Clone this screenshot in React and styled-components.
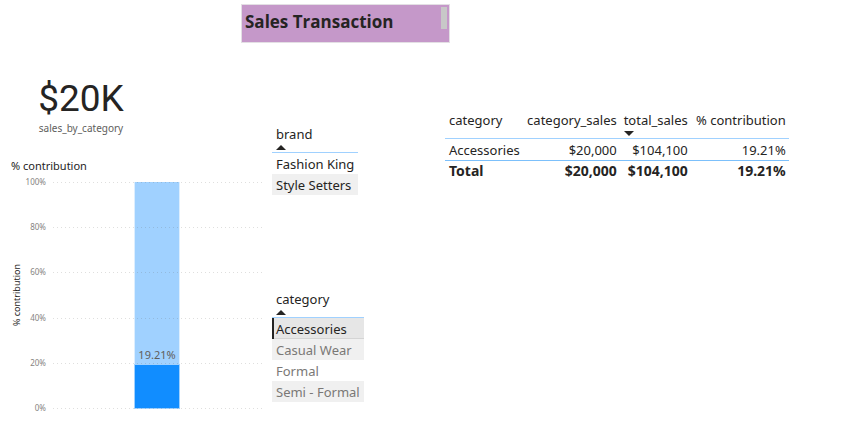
import React from "react";
import styled, { createGlobalStyle } from "styled-components";

const GlobalStyle = createGlobalStyle`
  * { box-sizing: border-box; }
  body {
    margin: 0;
    background: #fff;
    color: #252423;
    font-family: "Noto Sans", "Open Sans", sans-serif;
    font-size: 13px;
    line-height: 20px;
  }
`;

const Page = styled.main`
  padding-top: 4px;
`;

const Header = styled.header`
  display: grid;
  grid-template-columns: 241fr 209fr 402fr;
`;

const TitleCard = styled.div`
  grid-column: 2;
  display: flex;
  justify-content: space-between;
  height: 39px;
  padding: 2px 2px 0 3px;
  border: 1px solid #e3dfe4;
  background: #c598c9;
`;

const Title = styled.h1`
  margin: 0;
  font: 700 17px/29px "Open Sans", sans-serif;
  white-space: nowrap;
`;

const ScrollThumb = styled.span`
  width: 6px;
  height: 22px;
  background: #c8c8c8;
`;

const Board = styled.div`
  display: grid;
  grid-template-columns: 272fr 173fr 407fr;
  align-items: start;
`;

const Column = styled.section`
  min-width: 0;
  padding-top: ${(p) => p.$top}px;
`;

const Kpi = styled.div`
  display: flex;
  flex-direction: column;
  align-items: center;
  width: 162px;
`;

const KpiValue = styled.strong`
  font: 400 37px/44px Roboto, sans-serif;
`;

const KpiLabel = styled.span`
  color: #605e5c;
  font-size: 10px;
  line-height: 15px;
`;

const ChartTitle = styled.h2`
  margin: 22px 0 0;
  padding-left: 11px;
  font-size: 11px;
  font-weight: 400;
  line-height: 16px;
`;

const Chart = styled.svg`
  display: block;
  width: 100%;
  height: auto;
  font-family: "Noto Sans", sans-serif;
`;

const Table = styled.table`
  border-collapse: separate;
  border-spacing: 0;
  margin-bottom: ${(p) => p.$after || 0}px;
  white-space: nowrap;
`;

const HeadCell = styled.th`
  height: 29px;
  padding: 0 ${(p) => (p.$align ? 3 : 4)}px;
  border-bottom: 1px solid #a0d1ff;
  font-weight: 400;
  text-align: ${(p) => p.$align || "left"};
  vertical-align: top;
`;

const SortButton = styled.button`
  display: flex;
  flex-direction: column;
  align-items: flex-start;
  padding: 0;
  border: 0;
  background: none;
  color: inherit;
  font: inherit;
  margin-left: ${(p) => (p.$end ? "auto" : "0")};
  cursor: pointer;
`;

const Arrow = styled.svg`
  display: block;
  width: 10px;
  height: 5px;
  margin-top: 1px;
  fill: #252423;
`;

const ListCell = styled.td`
  height: 21px;
  padding: 0 4px;
  color: ${(p) => (p.$dim ? "#7a7876" : "#252423")};
  background: ${(p) => (p.$selected ? "#e6e6e6" : p.$shade ? "#f0f0f0" : "#fff")};
  box-shadow: ${(p) =>
    p.$selected ? "inset 2px 0 #252423, inset 0 -1px #d4d4d4" : "none"};
`;

const Cell = styled.td`
  height: 21px;
  padding: 0 ${(p) => (p.$align ? 3 : 4)}px;
  text-align: ${(p) => p.$align || "left"};
`;

const TotalCell = styled(Cell)`
  border-top: 1px solid #7cc0fb;
  font-size: 14px;
  font-weight: 700;
`;

const Col = styled.col`
  width: ${(p) => p.$width}px;
`;

function SortArrow({ down }) {
  return (
    <Arrow viewBox="0 0 10 5" aria-hidden="true">
      <path d={down ? "M0 0H10L5 5Z" : "M0 5H10L5 0Z"} />
    </Arrow>
  );
}

function FieldList({ name, items, selected, after }) {
  return (
    <Table $after={after}>
      <thead>
        <tr>
          <HeadCell aria-sort="ascending">
            <SortButton>
              {name}
              <SortArrow />
            </SortButton>
          </HeadCell>
        </tr>
      </thead>
      <tbody>
        {items.map((item, i) => (
          <tr key={item}>
            <ListCell
              $selected={item === selected}
              $dim={selected && item !== selected}
              $shade={i % 2 === 1}
            >
              {item}
            </ListCell>
          </tr>
        ))}
      </tbody>
    </Table>
  );
}

const ticks = [
  { label: "100%", y: 8 },
  { label: "80%", y: 53 },
  { label: "60%", y: 98 },
  { label: "40%", y: 144 },
  { label: "20%", y: 189 },
  { label: "0%", y: 234 },
];

function ContributionChart() {
  return (
    <Chart viewBox="0 0 272 246" role="img" aria-label="% contribution">
      <rect x="134" y="8" width="46" height="227" fill="#dceeff" />
      <rect x="135" y="8" width="44" height="183" fill="#a0d1ff" />
      <rect x="134" y="190" width="46" height="45" fill="#a0d1ff" />
      <rect x="135" y="191" width="44" height="43" fill="#118dff" />
      {ticks.map((t) => (
        <g key={t.label}>
          <line
            x1="53"
            x2="263"
            y1={t.y + 0.5}
            y2={t.y + 0.5}
            stroke="#605e5c"
            strokeOpacity="0.2"
            strokeDasharray="1 3"
          />
          <text x="46" y={t.y + 3} fontSize="8" fill="#858381" textAnchor="end">
            {t.label}
          </text>
        </g>
      ))}
      <text x="157" y="185" fontSize="11" fill="#605e5c" textAnchor="middle">
        19.21%
      </text>
      <text
        transform="translate(20 121) rotate(-90)"
        fontSize="9"
        fill="#252423"
        textAnchor="middle"
      >
        % contribution
      </text>
    </Chart>
  );
}

export default function App() {
  return (
    <Page>
      <GlobalStyle />
      <Header>
        <TitleCard>
          <Title>Sales Transaction</Title>
          <ScrollThumb />
        </TitleCard>
      </Header>
      <Board>
        <Column $top={34}>
          <Kpi>
            <KpiValue>$20K</KpiValue>
            <KpiLabel>sales_by_category</KpiLabel>
          </Kpi>
          <ChartTitle>% contribution</ChartTitle>
          <ContributionChart />
        </Column>
        <Column $top={81}>
          <FieldList name="brand" items={["Fashion King", "Style Setters"]} after={94} />
          <FieldList
            name="category"
            items={["Accessories", "Casual Wear", "Formal", "Semi - Formal"]}
            selected="Accessories"
          />
        </Column>
        <Column $top={67}>
          <Table>
            <colgroup>
              <Col $width={78} />
              <Col $width={96} />
              <Col $width={71} />
              <Col $width={98} />
            </colgroup>
            <thead>
              <tr>
                <HeadCell>category</HeadCell>
                <HeadCell $align="right">category_sales</HeadCell>
                <HeadCell $align="right" aria-sort="descending">
                  <SortButton $end>
                    total_sales
                    <SortArrow down />
                  </SortButton>
                </HeadCell>
                <HeadCell $align="right">% contribution</HeadCell>
              </tr>
            </thead>
            <tbody>
              <tr>
                <Cell>Accessories</Cell>
                <Cell $align="right">$20,000</Cell>
                <Cell $align="right">$104,100</Cell>
                <Cell $align="right">19.21%</Cell>
              </tr>
            </tbody>
            <tfoot>
              <tr>
                <TotalCell>Total</TotalCell>
                <TotalCell $align="right">$20,000</TotalCell>
                <TotalCell $align="right">$104,100</TotalCell>
                <TotalCell $align="right">19.21%</TotalCell>
              </tr>
            </tfoot>
          </Table>
        </Column>
      </Board>
    </Page>
  );
}
